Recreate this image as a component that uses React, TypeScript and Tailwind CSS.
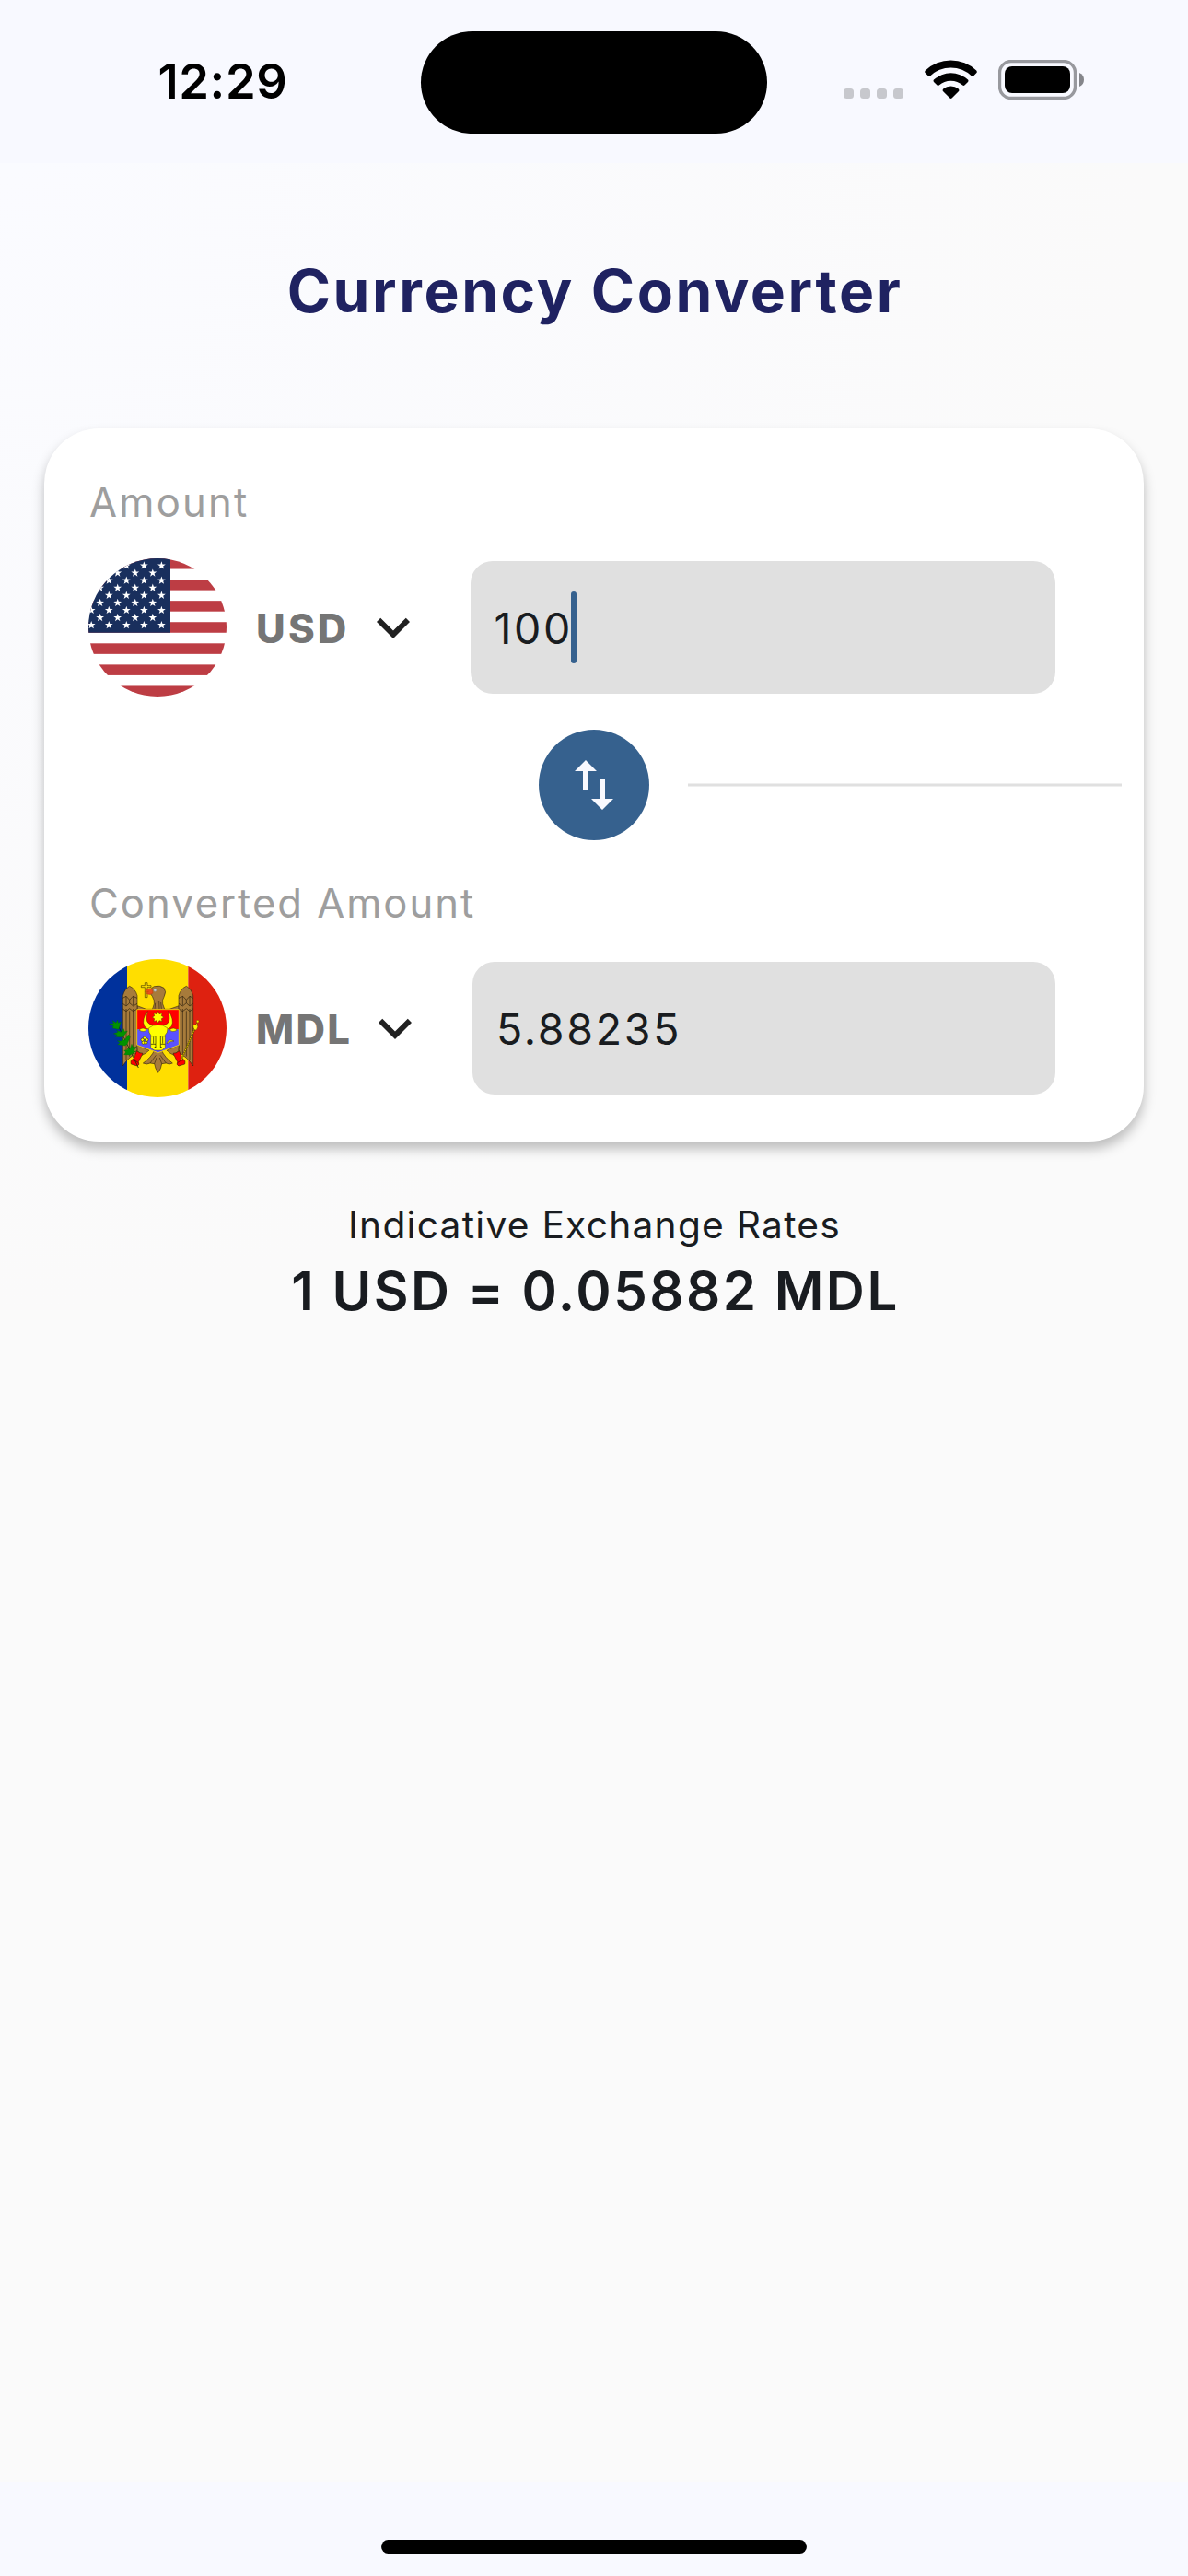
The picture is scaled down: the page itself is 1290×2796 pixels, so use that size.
import type { ReactNode } from "react";

function StatusBar() {
  return (
    <header className="flex h-[177px] bg-[#f8f9ff]">
      <div className="w-[457px] pl-[171.5px] pt-[58px] text-[52.5px] font-semibold leading-[60px] tracking-[0.6px] text-black">
        12:29
      </div>
      <div className="mt-[33.500px] h-[111px] w-[376px] rounded-full bg-black" />
      <div className="flex pl-[83px] pt-[65px]">
        <div className="mt-[31px] flex gap-[7px]">
          {[0, 1, 2, 3].map((i) => (
            <span key={i} className="h-[11px] w-[11px] rounded-[3.5px] bg-[#c7c8cd]" />
          ))}
        </div>
        <svg className="ml-[23px] h-[42px] w-[57px]" viewBox="0 0 57 42">
          <path d="M0.8 11.6Q-.4 13 .8 14.3L4 17.6Q5 18.4 6 17.5A32.5 32.5 0 0 1 51 17.5Q52 18.4 53 17.6L56.200 14.3Q57.4 13 56.2 11.600A40 40 0 0 0 .8 11.600Z" />
          <path d="M10 21.6Q9 22.8 10 24L13.600 27.6Q14.600 28.5 15.700 27.600A19 19 0 0 1 41.300 27.600Q42.400 28.500 43.400 27.600L47 24Q48 22.8 47 21.600A27 27 0 0 0 10 21.600Z" />
          <path d="M20.200 31.600Q19 33 20.200 34.200L27.500 41.500Q28.500 42.300 29.500 41.500L36.800 34.200Q38 33 36.800 31.600A13 13 0 0 0 20.200 31.600Z" />
        </svg>
        <svg className="ml-[23px] h-[43px] w-[94px]" viewBox="0 0 94 43">
          <rect x="1.500" y="1.500" width="82" height="40" rx="12.500" fill="none" stroke="#98999e" strokeWidth="3.400" />
          <rect x="7" y="7" width="71" height="29" rx="8" />
          <path d="M88 14Q93 16 93 21.500T88 29Z" fill="#85868b" />
        </svg>
      </div>
    </header>
  );
}

const STAR = "M0-4.600 1.080-1.480 4.370-1.420 1.750.57 2.700 3.720 0 1.840-2.700 3.720-1.750.57-4.370-1.420-1.080-1.480Z";

function UsFlag() {
  const stars: ReactNode[] = [];
  for (let row = 0; row < 9; row++) {
    for (let col = 0; col < 5; col++) {
      const x = (row % 2 === 0 ? 79.400 : 69.800) - col * 19.050;
      stars.push(<path key={`${row}-${col}`} d={STAR} transform={`translate(${x} ${7.900 + row * 8.080})`} fill="#fff" />);
    }
  }
  return (
    <svg className="h-[150px] w-[150px] shrink-0 rounded-full" viewBox="0 0 150 150">
      <rect width="150" height="150" fill="#fff" />
      {[0, 2, 4, 6, 8, 10, 12].map((i) => (
        <rect key={i} y={i * 11.538} width="150" height="11.538" fill="#bd3d44" />
      ))}
      <rect width="89" height="80.770" fill="#192f5d" />
      {stars}
    </svg>
  );
}

function Wing() {
  return (
    <g>
      <path d="M160 411V182Q166 160 182 151Q201 160 207 182V368Q178 382 160 411Z" fill="#a77b3b" />
      <path d="M171 225V392M182 232V380M194 225V372M160 190l11 -6 11 12 11 -12 14 6M160 208l11 8 11 -10 12 10 13 -8M160 225l11 8 11 -9 12 9 13 -8M171 184v30M194 184v30M182 196v10" fill="none" strokeWidth="1.800" />
    </g>
  );
}

function Leg() {
  return (
    <g>
      <path d="M206 343L246 360Q234 372 222 376L208 362Z" fill="#a77b3b" />
      <path d="M205 362Q214 370 225 370L211 398Q216 407 207 411L187 405Q183 391 196 387Z" fill="#ff0000" />
      <path d="M190 392q10 -1 20 8" fill="none" />
    </g>
  );
}

function MoldovaFlag() {
  const mirror = "translate(549 0) scale(-1 1)";
  return (
    <svg className="h-[150px] w-[150px] shrink-0 rounded-full" viewBox="48 63 450 450">
      <rect x="48" y="63" width="126" height="450" fill="#00319c" />
      <rect x="174" y="63" width="199" height="450" fill="#ffde00" />
      <rect x="373" y="63" width="125" height="450" fill="#de2110" />
      <g stroke="#1c1408" strokeWidth="1.600" strokeLinejoin="round">
        <path d="M207 215L236 226H312L343 215V245H207Z" fill="#a77b3b" />
        <Wing />
        <g transform={mirror}>
          <Wing />
        </g>
        <path d="M250 176Q245 160 262 152Q281 147 294 157Q303 170 295 184Q287 197 290 209L297 228H256L262 209Q264 197 256 184Z" fill="#a77b3b" />
        <path d="M266 206l-2 20M272 198l-1 28M278 198l1 28M284 204l2 22" fill="none" />
        <path d="M232 140h8v9h12v6h-12v33h-8v-33h-12v-6h12Z" fill="#ffde00" />
        <path d="M255 159Q240 158 232 170L244 169L236 175Q248 182 258 174Z" fill="#e8501c" stroke="#c33a10" />
        <circle cx="265" cy="164" r="4.500" fill="#c8ccd4" stroke="#8d8d8d" />
        <path d="M264 358Q252 384 226 402Q238 408 249 402L263 404Q265 420 275 433Q285 420 287 404L301 402Q312 408 322 402Q297 384 285 358Z" fill="#a77b3b" />
        <path d="M268 376L249 402M282 376L301 402M270 384L263 404M280 384L287 404" fill="none" />
        <Leg />
        <g transform={mirror}>
          <Leg />
        </g>
      </g>
      <path d="M206 227H343V292H206Z" fill="#ff0000" />
      <path d="M206 292H343V343L275 368L206 343Z" fill="#5a52ff" />
      <path d="M206 227H343V343L275 368L206 343Z" fill="none" stroke="#ffde00" strokeWidth="2.500" />
      <g fill="#ffff00" stroke="#3a3000" strokeWidth="1.300" strokeLinejoin="round">
        <path d="M250 294Q222 286 228 258Q231 242 241 233Q232 262 244 272Q252 279 275 278Q298 279 306 272Q317 262 308 233Q318 242 321 258Q327 286 299 294Z" />
        <path d="M244 288Q258 276 275 277Q291 276 306 288Q306 304 298 310V350Q290 360 285 360H264Q258 360 251 350V310Q244 304 244 288Z" />
        <path d="M213 294Q225 283 237 293Q229 304 213 294ZM337 294Q325 283 313 293Q321 304 337 294Z" />
        <path d="M303 338Q309 321 327 330Q314 330 303 338Z" />
        <path d="M275 233l4 9 9-3-2 9 8 4-8 5 2 9-9-3-4 8-5-8-9 3 2-9-7-5 7-4-2-9 9 3Z" />
        <g strokeWidth="1.800">
          <circle cx="231" cy="320" r="5" />
          <circle cx="224" cy="326" r="5" />
          <circle cx="238" cy="326" r="5" />
          <circle cx="227" cy="335" r="5" />
          <circle cx="235" cy="335" r="5" />
        </g>
      </g>
      <path d="M252 314h15v26h-15M298 314h-15v26h15M260 316v22M290 316v22M267 340v12M283 340v12" fill="none" stroke="#000" strokeWidth="1.800" />
      <circle cx="265" cy="351" r="2.500" />
      <circle cx="285" cy="351" r="2.500" />
      <path d="M145 280L211 417" fill="none" stroke="#083808" strokeWidth="2.500" />
      <g fill="#009200" stroke="#006a00" strokeWidth="1">
        <path d="M146 292L126 287L130 281L116 274L130 273L127 263L138 271L143 261L145 271L154 267Z" />
        <path d="M157 317L136 316L141 309L130 306L144 301L140 295L154 301L163 290L166 299L175 297L163 314Z" />
        <path d="M167 345L143 341L151 335L142 329L158 330L158 323L166 328L178 309L184 317L174 340Z" />
        <path d="M184 375L164 374L170 366L164 360L176 359L174 352L183 357L189 340L194 351L204 348L196 363L204 363Z" />
      </g>
      <path d="M402 272L351 390" fill="none" stroke="#4a3c00" strokeWidth="5" />
      <path d="M402 272L351 390" fill="none" stroke="#ffde00" strokeWidth="2.600" strokeDasharray="5 1.500" />
      <g fill="#ffee00" stroke="#4a3c00" strokeWidth="1.300">
        <path d="M389 279Q396 272 405 281Q404 291 396 295Q389 290 389 279Z" />
        <circle cx="404" cy="266" r="4" />
      </g>
    </svg>
  );
}

function CurrencyRow({ flag, code, gap, children }: { flag: ReactNode; code: string; gap: string; children: ReactNode }) {
  return (
    <div className="flex h-[150px] items-center pl-[48px] pr-[96px]">
      {flag}
      <span className={`relative top-[1.5px] ml-[32px] text-[43.6px] font-extrabold text-[#757575] ${gap}`}>{code}</span>
      <svg className="h-[72px] w-[72px] shrink-0" viewBox="0 0 24 24" fill="#212121">
        <path d="M7.410 8.590 12 13.170l4.590-4.580L18 10l-6 6-6-6z" />
      </svg>
      {children}
    </div>
  );
}

export default function App() {
  return (
    <div className="flex h-[2796px] w-[1290px] flex-col overflow-hidden whitespace-nowrap font-['Inter',sans-serif]">
      <StatusBar />
      <main className="flex-1 bg-[radial-gradient(circle_at_top_left,#fafbff_0px,#fafafa_1250px)]">
        <h1 className="pl-[2px] pt-[98px] text-center text-[64px] font-bold leading-[82px] tracking-[2.63px] text-[#1f2261]">
          Currency Converter
        </h1>
        <section className="mx-[48px] mt-[108px] h-[774px] rounded-[60px] bg-white pt-[51px] shadow-[0_8px_13px_rgba(0,0,0,0.25)]">
          <div className="pl-[49px] text-[43.6px] leading-[60px] tracking-[2.2px] text-[#9e9e9e]">Amount</div>
          <div className="mt-[30px]">
            <CurrencyRow flag={<UsFlag />} code="USD" gap="w-[112.5px] tracking-[3.2px]">
              <div className="ml-[48px] flex h-[144px] flex-1 items-center rounded-[24px] bg-[#e0e0e0] pl-[26px] text-[46.5px] tracking-[2.68px] text-[#191c20]">
                <span className="relative top-[1.5px] w-[83.5px]">100</span>
                <span className="h-[78px] w-[6px] rounded-full bg-[#36618e]" />
              </div>
            </CurrencyRow>
          </div>
          <div className="mt-[36px] flex h-[120px] items-center pl-[537px]">
            <div className="flex h-[120px] w-[120px] items-center justify-center rounded-full bg-[#36618e]">
              <svg className="h-[72px] w-[72px]" viewBox="0 0 24 24" fill="#f8f9ff">
                <path d="M16 17.010V10h-2v7.010h-3L15 21l4-3.990h-3zM9 3 5 6.990h3V14h2V6.990h3L9 3z" />
              </svg>
            </div>
            <div className="ml-[42px] h-[4px] w-[471px] border-y border-[#efefef] bg-[#e0e0e0]" />
          </div>
          <div className="mt-[39px] pl-[49px] text-[43.6px] leading-[60px] tracking-[1.97px] text-[#9e9e9e]">
            Converted Amount
          </div>
          <div className="mt-[30px]">
            <CurrencyRow flag={<MoldovaFlag />} code="MDL" gap="w-[115px] tracking-[2.3px]">
              <div className="ml-[48px] flex h-[144px] flex-1 items-center rounded-[24px] bg-[#e0e0e0] pl-[26px] text-[46.5px] tracking-[2.7px] text-[#191c20]">
                <span className="relative top-[1.5px]">5.88235</span>
              </div>
            </CurrencyRow>
          </div>
        </section>
        <div className="mt-[61px] text-center text-[#191c20]">
          <p className="pl-px text-[40.7px] leading-[60px] tracking-[1.26px]">Indicative Exchange Rates</p>
          <p className="mt-px pl-[3px] text-[58.2px] font-semibold leading-[80px] tracking-[2.5px]">1 USD = 0.05882 MDL</p>
        </div>
      </main>
      <footer className="flex h-[102px] justify-center bg-[#f8f9ff] pt-[63px]">
        <div className="h-[15px] w-[462px] rounded-full bg-black" />
      </footer>
    </div>
  );
}
